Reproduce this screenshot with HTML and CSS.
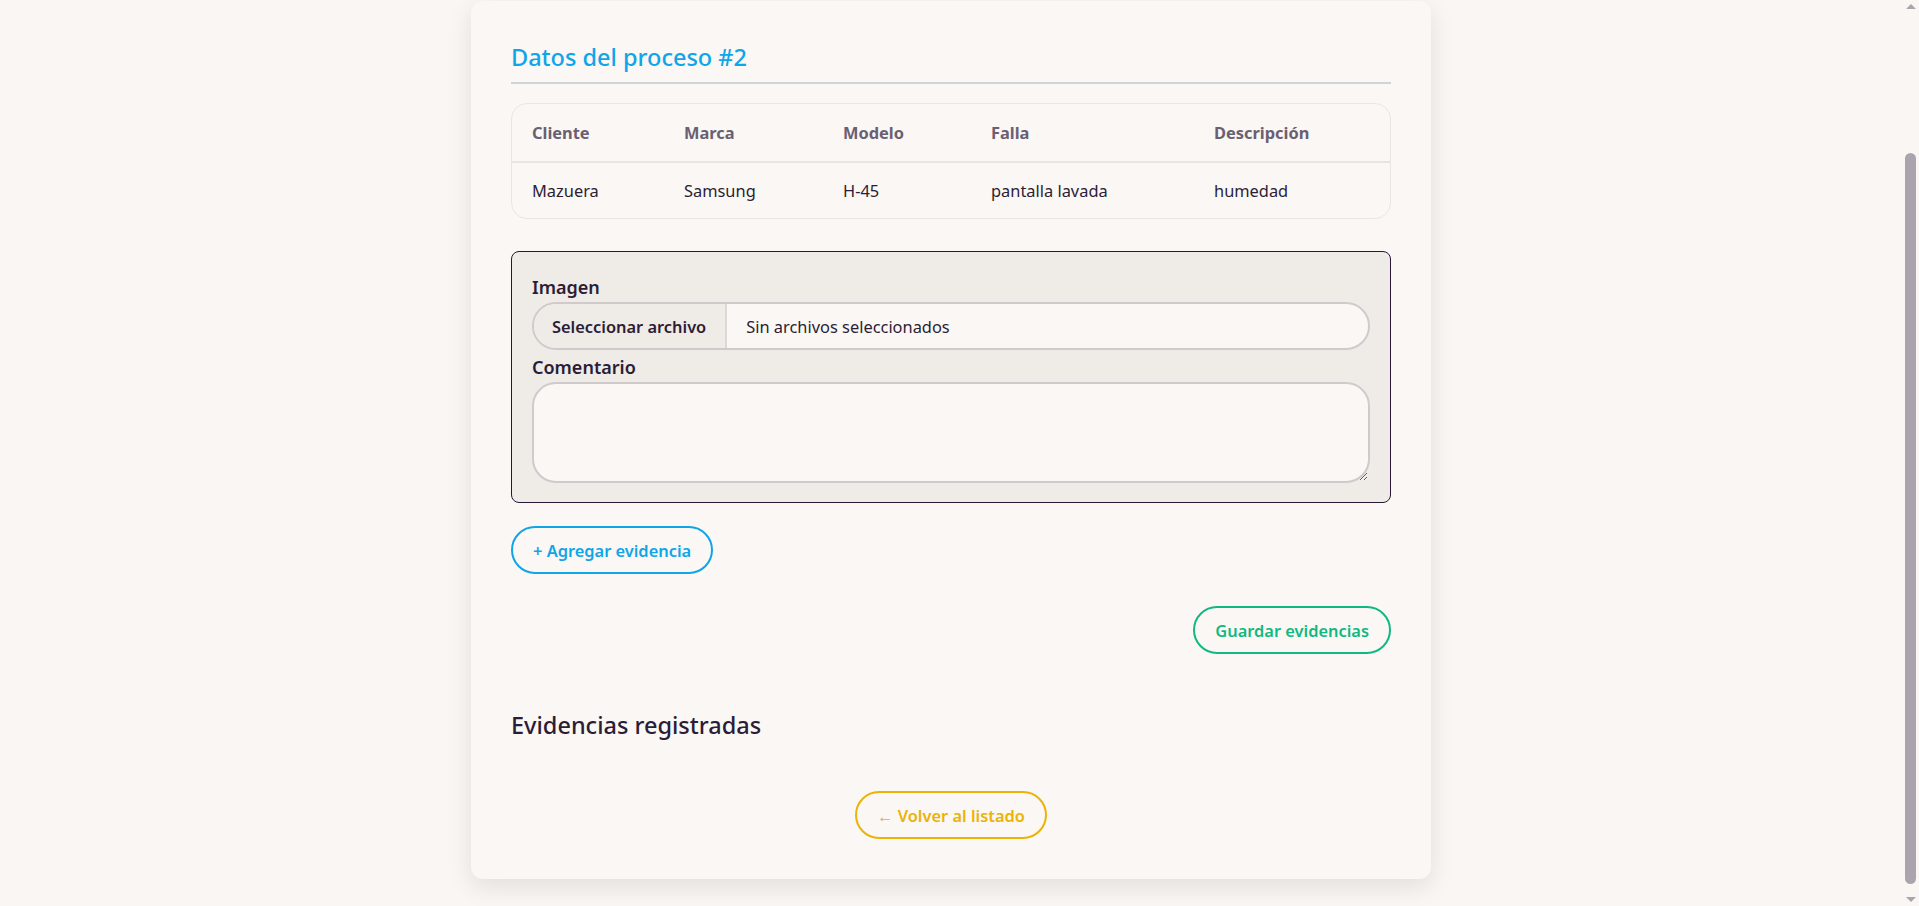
FILE: index.html
```html
<!DOCTYPE html>
<html lang="es">
<head>
<meta charset="utf-8">
<title>Evidencias del proceso #2</title>
<link rel="stylesheet" href="styles.css">
</head>
<body>
<main class="page">
  <section class="card">
    <h2 class="section-title">Datos del proceso #2</h2>
    <div class="table-wrap">
      <table class="data-table">
        <thead>
          <tr><th>Cliente</th><th>Marca</th><th>Modelo</th><th>Falla</th><th>Descripción</th></tr>
        </thead>
        <tbody>
          <tr><td>Mazuera</td><td>Samsung</td><td>H-45</td><td>pantalla lavada</td><td>humedad</td></tr>
        </tbody>
      </table>
    </div>
    <form class="evidence-form">
      <div class="evidence-item">
        <label class="field-label">Imagen</label>
        <div class="file-input"><span class="file-btn">Seleccionar archivo</span><span class="file-name">Sin archivos seleccionados</span></div>
        <label class="field-label field-label-gap">Comentario</label>
        <textarea class="comment"></textarea>
      </div>
      <div class="add-row"><button type="button" class="btn btn-blue">+ Agregar evidencia</button></div>
      <div class="save-row"><button type="button" class="btn btn-green">Guardar evidencias</button></div>
    </form>
    <h3 class="sub-title">Evidencias registradas</h3>
    <div class="back-row"><a class="btn btn-amber" href="#">← Volver al listado</a></div>
  </section>
</main>
<div class="scrollbar" aria-hidden="true">
  <span class="sb-arrow sb-up"></span>
  <span class="sb-track"><span class="sb-thumb"></span></span>
  <span class="sb-arrow sb-down"></span>
</div>
<script src="script.js"></script>
</body>
</html>
```

FILE: styles.css
```css
html {
  background: #f9f6f3;
}

body {
  margin: 0;
  font-family: "Noto Sans", "Open Sans", sans-serif;
  color: #2b1d36;
  background: #f9f6f3;
}

.page {
  padding: 172px 0 27px;
  margin-right: 17px;
}

/* window scrollbar (drawn, the headless window hides its own) */
.scrollbar {
  position: fixed;
  top: 0;
  right: 0;
  bottom: 0;
  width: 17px;
  display: flex;
  flex-direction: column;
  align-items: center;
  background: #f9f6f3;
}
.sb-arrow {
  width: 0;
  height: 0;
  box-sizing: border-box;
  border-left: 5px solid transparent;
  border-right: 5px solid transparent;
}
.sb-up {
  margin-top: 4px;
  flex: 0 0 5px;
  border-bottom: 5px solid #aca4ad;
}
.sb-down {
  margin-bottom: 4px;
  flex: 0 0 5px;
  border-top: 5px solid #aca4ad;
}
.sb-track {
  flex: 1;
  width: 100%;
  box-sizing: border-box;
  display: flex;
  padding: 144px 3px 13px;
}
.sb-thumb {
  flex: 1;
  background: #aca4ad;
  border-radius: 6px;
}

.card {
  max-width: 960px;
  box-sizing: border-box;
  margin: 0 auto;
  padding: 40px;
  background: #faf7f4;
  border-radius: 12px;
  box-shadow: 0 8px 24px rgba(40, 20, 40, 0.10);
}

.section-title {
  margin: 0;
  padding-bottom: 9px;
  font-size: 23.5px;
  line-height: 32px;
  font-weight: 500;
  color: #0ea5e9;
  border-bottom: 2px solid #cfd4dc;
}

.table-wrap {
  margin-top: 19px;
  border: 1px solid #ebe6e4;
  border-radius: 16px;
  overflow: hidden;
}

.data-table {
  width: 100%;
  border-collapse: collapse;
  table-layout: fixed;
  font-size: 16.4px;
  line-height: 24px;
}
.data-table th {
  text-align: left;
  font-weight: 700;
  color: #6b5f72;
  padding: 17px 20px 16px;
  border-bottom: 2px solid #e9e4e3;
}
.data-table td {
  padding: 16px 20px 15px;
  color: #2b1d36;
}
.data-table th:nth-child(1) { width: 112px; }
.data-table th:nth-child(2) { width: 119px; }
.data-table th:nth-child(3) { width: 108px; }
.data-table th:nth-child(4) { width: 183px; }

.evidence-form {
  margin: 32px 0 0;
}

.evidence-item {
  background: #efebe7;
  border: 1px solid #2a1638;
  border-radius: 8px;
  padding: 22px 20px 19px;
}

.field-label {
  display: block;
  font-size: 18px;
  line-height: 27px;
  font-weight: 600;
  color: #2b1d36;
  margin-bottom: 1px;
}
.field-label-gap {
  margin-top: 4px;
  margin-bottom: 1px;
}

.file-input {
  display: flex;
  height: 48px;
  box-sizing: border-box;
  border: 2px solid #d0cacc;
  border-radius: 24px;
  overflow: hidden;
  background: #faf7f4;
  font-size: 16.4px;
}
.file-btn {
  display: flex;
  align-items: center;
  padding: 0 19px 0 18px;
  background: #efebe7;
  border-right: 2px solid #ddd7d6;
  font-weight: 600;
  color: #2b1d36;
}
.file-name {
  display: flex;
  align-items: center;
  padding-left: 19px;
  color: #2b1d36;
}

.comment {
  display: block;
  width: 100%;
  height: 101px;
  box-sizing: border-box;
  border: 2px solid #d0cacc;
  border-radius: 24px;
  background: #faf7f4;
  resize: vertical;
  font-family: inherit;
  font-size: 16px;
  padding: 10px 18px;
  outline: none;
}

.btn {
  display: inline-flex;
  align-items: center;
  justify-content: center;
  box-sizing: border-box;
  height: 48px;
  padding: 0 20px;
  border-radius: 24px;
  border: 2px solid currentColor;
  background: transparent;
  font-family: inherit;
  font-size: 16.4px;
  font-weight: 600;
  text-decoration: none;
  cursor: pointer;
}
.btn-blue { color: #0ea5e9; }
.btn-green { color: #10b981; }
.btn-amber { color: #eab308; }

.add-row {
  margin-top: 23px;
}
.save-row {
  display: flex;
  justify-content: flex-end;
  margin-top: 32px;
}

.sub-title {
  margin: 58px 0 0;
  font-size: 23.5px;
  line-height: 26px;
  font-weight: 500;
  color: #2b1d36;
}

.back-row {
  display: flex;
  justify-content: center;
  margin-top: 53px;
}
```

FILE: script.js
```js
function scrollToEnd() {
  window.scrollTo(0, document.documentElement.scrollHeight);
}
scrollToEnd();
window.addEventListener('load', scrollToEnd);
```
